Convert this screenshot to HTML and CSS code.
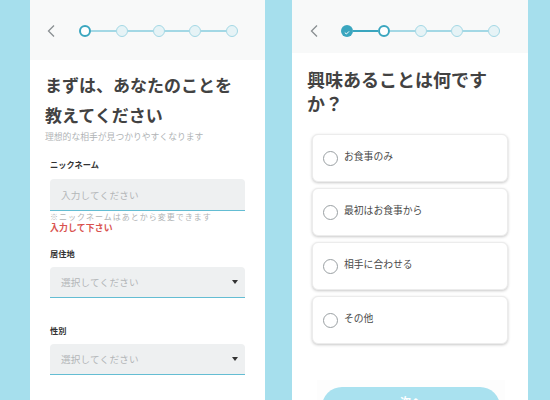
FILE: index.html
```html
<!DOCTYPE html>
<html lang="ja">
<head>
<meta charset="utf-8">
<link rel="stylesheet" href="styles.css">
</head>
<body>
<div class="stage">
  <section class="phone phone-left">
    <header class="head head-left">
      <svg class="back" width="8" height="12" viewBox="0 0 8 12"><polyline points="7,0.5 1.5,6 7,11.5" fill="none" stroke="#8a8f92" stroke-width="1.3"/></svg>
      <div class="stepper">
        <span class="dot dot-current"></span><span class="line"></span>
        <span class="dot"></span><span class="line"></span>
        <span class="dot"></span><span class="line"></span>
        <span class="dot"></span><span class="line"></span>
        <span class="dot"></span>
      </div>
    </header>
    <h1 class="title title-left">まずは、あなたのことを<br>教えてください</h1>
    <p class="sub">理想的な相手が見つかりやすくなります</p>
    <div class="form">
      <div class="label label-first">ニックネーム</div>
      <div class="field"><span class="ph">入力してください</span></div>
      <div class="note">※ニックネームはあとから変更できます</div>
      <div class="error">入力して下さい</div>
      <div class="label label-second">居住地</div>
      <div class="field select"><span class="ph">選択してください</span><span class="caret"></span></div>
      <div class="label label-third">性別</div>
      <div class="field select"><span class="ph">選択してください</span><span class="caret"></span></div>
    </div>
  </section>

  <section class="phone phone-right">
    <header class="head head-right">
      <svg class="back" width="8" height="12" viewBox="0 0 8 12"><polyline points="7,0.5 1.5,6 7,11.5" fill="none" stroke="#8a8f92" stroke-width="1.3"/></svg>
      <div class="stepper">
        <span class="dot dot-done"><svg width="12" height="12" viewBox="0 0 12 12"><polyline points="3.8,7.6 5.4,9 8,6.4" fill="none" stroke="#fff" stroke-width="1"/></svg></span><span class="line line-done"></span>
        <span class="dot dot-current"></span><span class="line"></span>
        <span class="dot"></span><span class="line"></span>
        <span class="dot"></span><span class="line"></span>
        <span class="dot"></span>
      </div>
    </header>
    <h1 class="title title-right">興味あることは何です<br>か？</h1>
    <div class="options">
      <div class="card"><span class="radio"></span><span class="opt">お食事のみ</span></div>
      <div class="card"><span class="radio"></span><span class="opt">最初はお食事から</span></div>
      <div class="card"><span class="radio"></span><span class="opt">相手に合わせる</span></div>
      <div class="card"><span class="radio"></span><span class="opt">その他</span></div>
    </div>
    <div class="footer">
      <div class="btn">次へ</div>
    </div>
  </section>
</div>
</body>
</html>
```

FILE: styles.css
```css
* { box-sizing: border-box; margin: 0; padding: 0; }
html, body { width: 550px; height: 400px; overflow: hidden; }
body {
  background: #a6dfed;
  font-family: "Noto Sans CJK JP", "Noto Sans", sans-serif;
  color: #333;
}
.stage {
  display: flex;
  gap: 27px;
  padding-left: 30px;
  height: 400px;
}
.phone {
  background: #fff;
  height: 400px;
  overflow: hidden;
}
.phone-left { width: 235px; }
.phone-right { width: 236px; }

.head {
  background: #f8f9f9;
  display: flex;
  padding-left: 17px;
  padding-top: 25px;
  gap: 24px;
}
.head-left { height: 60px; align-items: flex-start; }
.head-right { height: 53px; align-items: flex-start; padding-left: 18px; gap: 23px; }
.back { display: block; flex: none; }
.stepper {
  display: flex;
  align-items: center;
  height: 12px;
}
.dot {
  width: 12px;
  height: 12px;
  border-radius: 50%;
  border: 1.5px solid #a3d8e5;
  background: #e6f3f6;
  flex: none;
  display: block;
}
.dot-current {
  border: 2.2px solid #3aa6bf;
  background: #fff;
}
.dot-done {
  border: none;
  background: #3aa6bf;
}
.dot-done svg { display: block; }
.line {
  width: 24.75px;
  height: 2px;
  background: #a3d8e5;
  flex: none;
  display: block;
}
.line-done { background: #3aa6bf; }

.title {
  font-weight: 700;
  color: #424242;
  padding-left: 15px;
}
.title-left {
  font-size: 17px;
  line-height: 30px;
  margin-top: 10px;
}
.title-right {
  font-size: 18px;
  line-height: 24px;
  margin-top: 14px;
}
.sub {
  font-size: 8.8px;
  line-height: 14px;
  color: #b0b4b6;
  padding-left: 15px;
}
.form { padding: 0 20px; }
.label {
  font-size: 8.2px;
  line-height: 12px;
  font-weight: 700;
  color: #333;
}
.label-first { margin-top: 14px; }
.label-second { margin-top: 14px; }
.label-third { margin-top: 26px; }
.field {
  margin-top: 9px;
  height: 32px;
  background: #eef0f1;
  border-radius: 4px 4px 0 0;
  border-bottom: 1px solid #64bdd3;
  display: flex;
  align-items: center;
  padding-left: 11px;
  padding-right: 7px;
}
.select { height: 31px; margin-top: 8px; justify-content: space-between; }
.ph {
  font-size: 9.6px;
  color: #b3b6b8;
  letter-spacing: 0.2px;
}
.caret {
  width: 0; height: 0;
  border-left: 3.5px solid transparent;
  border-right: 3.5px solid transparent;
  border-top: 4px solid #333;
}
.note {
  font-size: 8px;
  line-height: 11px;
  letter-spacing: 1px;
  color: #b0b4b6;
}
.error {
  font-size: 8.8px;
  line-height: 11px;
  font-weight: 700;
  color: #d9534f;
  letter-spacing: 0.2px;
}

.options {
  margin: 19px 20px 0 20px;
  display: flex;
  flex-direction: column;
  gap: 6px;
}
.card {
  height: 48px;
  background: #fff;
  border-radius: 6px;
  border: 1px solid #ececec;
  box-shadow: 0 1px 3px rgba(0,0,0,0.22);
  display: flex;
  align-items: center;
  padding-left: 10px;
  gap: 6px;
}
.radio {
  width: 15px;
  height: 15px;
  border-radius: 50%;
  border: 1.5px solid #9aa0a3;
  flex: none;
}
.opt {
  font-size: 9.8px;
  color: #4a4a4a;
  padding-bottom: 4px;
}
.footer {
  margin: 36px 23px 0 25px;
  padding-top: 7px;
  background: #fdfdfd;
  height: 40px;
}
.btn {
  margin: 0 5px;
  height: 40px;
  border-radius: 20px;
  background: #a9e1ef;
  color: #fff;
  font-weight: 700;
  font-size: 11px;
  text-align: center;
  line-height: 28px;
}
```
